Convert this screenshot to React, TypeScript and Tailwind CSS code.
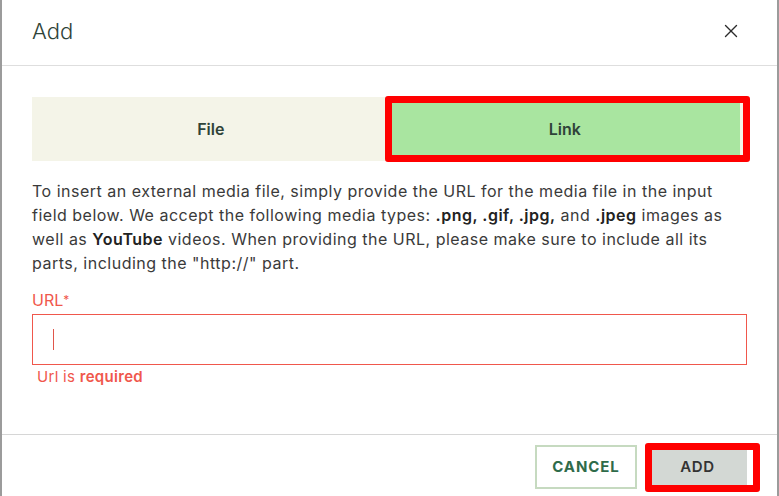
import { X } from "lucide-react";

const App = () => {
  return (
    <div className="w-[779px] h-[496px] bg-white border-x-2 border-[#9b9b9b] flex flex-col font-['Inter',sans-serif] overflow-hidden">
      {/* Header */}
      <div className="h-[66px] shrink-0 px-[30px] flex items-center justify-between border-b border-[#dedede]">
        <h1 className="text-[22px] leading-none font-light text-[#2f4339] -mt-[3px]">Add</h1>
        <button className="text-[#2b2b2b] -mt-[3px] mr-[5px]">
          <X size={22} strokeWidth={1.5} />
        </button>
      </div>

      {/* Body */}
      <div className="flex-1 px-[30px] pt-[31px]">
        <div className="relative grid grid-cols-2 h-[64px] bg-[#f4f4e8]">
          <button className="flex items-center justify-center text-[16px] font-semibold text-[#2f4339]">
            File
          </button>
          <button className="mr-[7px] flex items-center justify-center bg-[#a9e5a0] text-[16px] font-semibold text-[#2f4339]">
            Link
          </button>
          <div className="absolute left-[353px] -top-[1px] -right-[3px] -bottom-[1px] border-[7px] border-[#ff0000] rounded-[3px]" />
        </div>

        <p className="mt-[18px] text-[16px] leading-[24px] tracking-[0.5px] text-[#3a3a3a] whitespace-nowrap">
          To insert an external media file, simply provide the URL for the media file in the input
          <br />
          field below. We accept the following media types: <b className="font-semibold text-[#222]">.png, .gif, .jpg,</b> and <b className="font-semibold text-[#222]">.jpeg</b> images as
          <br />
          well as <b className="font-semibold text-[#222]">YouTube</b> videos. When providing the URL, please make sure to include all its
          <br />
          parts, including the "http://" part.
        </p>

        <label className="block mt-[15px] mb-[4px] text-[16px] leading-[20px] text-[#f0574c]">
          URL<span className="align-top text-[12px]">*</span>
        </label>
        <div className="h-[51px] border border-[#f0574c] flex items-center pl-[20px]">
          <div className="w-px h-[21px] bg-[#e0564b]" />
        </div>
        <p className="mt-[2px] pl-[5px] text-[15px] leading-[20px] tracking-[0.3px] text-[#f0574c]">
          Url is <span className="font-semibold">required</span>
        </p>
      </div>

      {/* Footer */}
      <div className="h-[62px] shrink-0 border-t border-[#d6d6d6] flex items-start justify-end gap-[11px] px-[30px] pt-[10px]">
        <button className="w-[102px] h-[44px] border-2 border-[#c6dac0] text-[15px] font-bold tracking-[0.06em] text-[#2f6b4a]">
          CANCEL
        </button>
        <button className="relative w-[99px] h-[44px] bg-[#d3d8d4] text-[15px] font-semibold tracking-[0.04em] text-[#333]">
          ADD
          <span className="absolute -left-[3px] -top-[2px] -right-[13px] -bottom-[3px] border-[7px] border-[#ff0000] rounded-[3px]" />
        </button>
      </div>
    </div>
  );
};

export default App;
